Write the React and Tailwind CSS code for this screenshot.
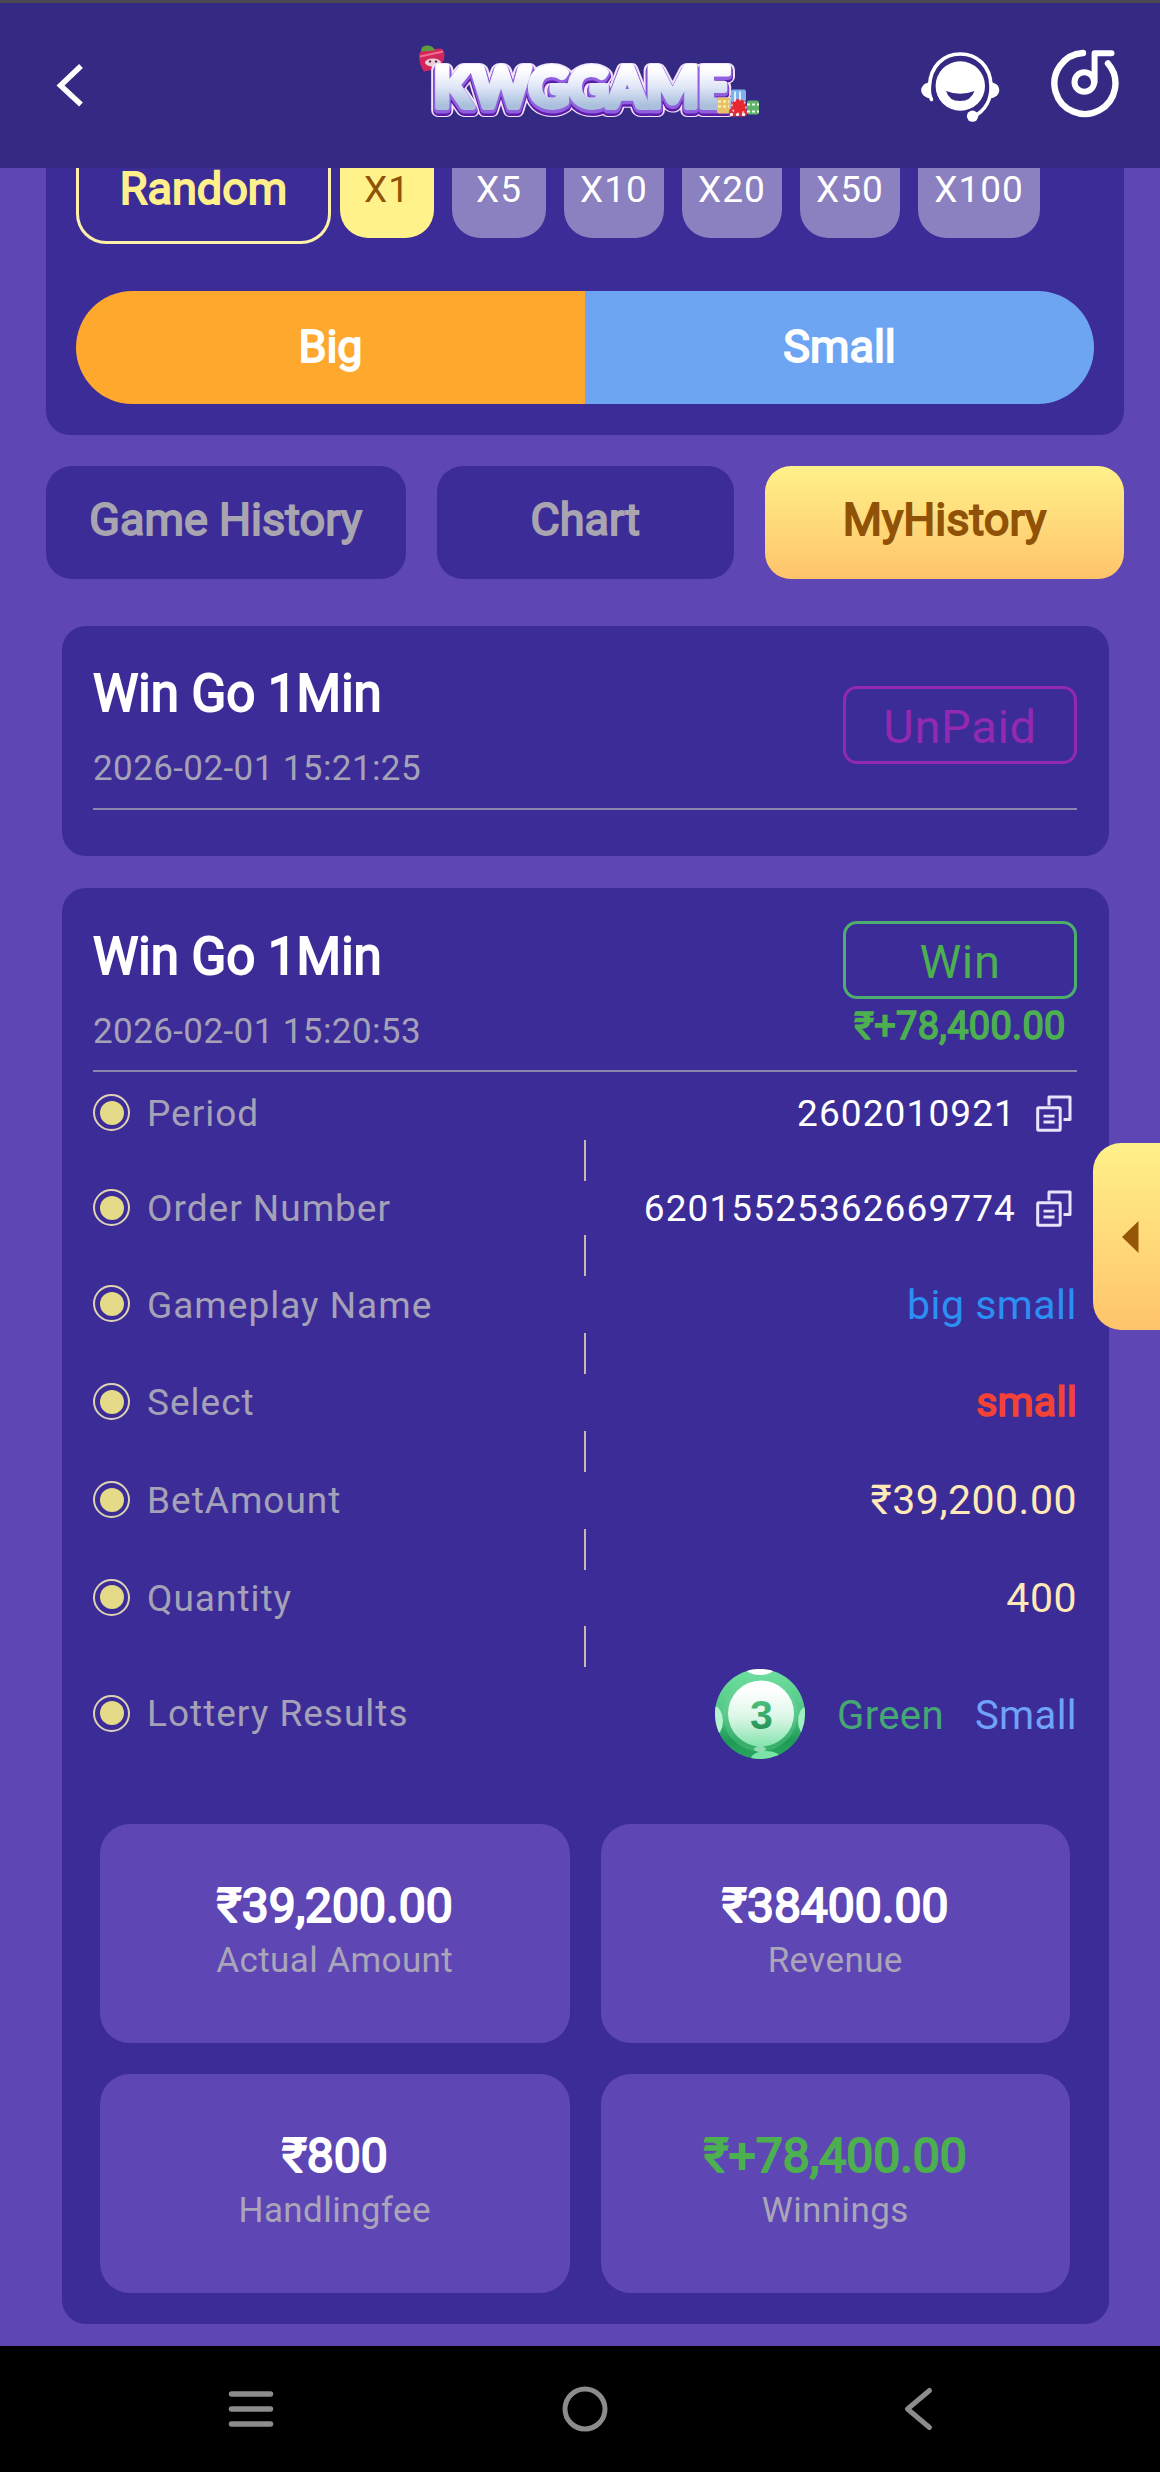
import { useState } from "react"

function BackIcon() {
    return (
        <svg width="40" height="90" viewBox="50 40.5 40 90" fill="none">
            <path d="M81 65.500 L60.5 85 L81 104" stroke="#fff" strokeWidth="5.500" />
        </svg>
    )
}

function Logo() {
    const word = {
        x: 434,
        textLength: 296,
        lengthAdjust: "spacingAndGlyphs",
        fontSize: 55,
        fontWeight: 900,
        fontFamily: "Lato, sans-serif",
        strokeLinejoin: "round",
    }
    return (
        <svg width="380" height="90" viewBox="400 40.5 380 90">
            <defs>
                <linearGradient id="face" x1="0" y1="0" x2="0" y2="1">
                    <stop offset="0.25" stopColor="#ffffff" />
                    <stop offset="0.5" stopColor="#e2e8f8" />
                    <stop offset="0.8" stopColor="#a9bfdc" />
                </linearGradient>
            </defs>
            {/* strawberry */}
            <g>
                <path d="M419 57 Q418 50 426 49 L441 48 Q446 50 444 59 L440 68 L424 71 Q420 66 419 57Z" fill="#d3265d" />
                <path d="M421 51 Q421 45 427 45 Q433 45 435 50Z" fill="#5f9c3f" />
                <path d="M420 56 L443 51" stroke="#ef6d8f" strokeWidth="2" />
                <ellipse cx="433" cy="62" rx="8" ry="4" fill="#e9cfd9" />
                <circle cx="430" cy="61" r="1.2" fill="#6d2a4a" />
                <circle cx="436" cy="61" r="1.2" fill="#6d2a4a" />
            </g>
            <text {...word} y="109" fill="#f3e4fb" stroke="#f3e4fb" strokeWidth="14">KWGGAME</text>
            <text {...word} y="110.500" fill="#5a1ba6" stroke="#5a1ba6" strokeWidth="10">KWGGAME</text>
            <text {...word} y="108" fill="#8f5fe0" stroke="#8f5fe0" strokeWidth="9">KWGGAME</text>
            <text {...word} y="106.500" fill="url(#face)" stroke="url(#face)" strokeWidth="6">KWGGAME</text>
            {/* casino chips */}
            <g>
                <rect x="731" y="89" width="15" height="12" rx="2" fill="#7fb0ee" />
                <path d="M735 91v9M740 91v9" stroke="#fff" strokeWidth="1.5" />
                <rect x="717" y="97" width="13" height="16" rx="2" fill="#e8c065" />
                <path d="M718 101h11M718 106h11" stroke="#fff2c2" strokeWidth="2" strokeDasharray="3 2" />
                <rect x="747" y="100" width="12" height="14" rx="2" fill="#63b26b" />
                <path d="M747 104h12M747 111h12" stroke="#e8ffe8" strokeWidth="2" strokeDasharray="3 2" />
                <rect x="729" y="108" width="18" height="8" rx="3" fill="#d9344a" />
                <path d="M730 114h16" stroke="#fff" strokeWidth="2.5" strokeDasharray="3 3" />
                <circle cx="739" cy="106" r="7.5" fill="#e8282e" />
                <circle cx="739" cy="106" r="7" fill="none" stroke="#ffd9d9" strokeWidth="1.5" strokeDasharray="2 3.5" />
            </g>
        </svg>
    )
}

function ServiceIcon() {
    return (
        <svg width="82" height="90" viewBox="919 40.5 82 90" fill="none">
            <path d="M931.5 99 C929 94 929 89 929.5 85 C930.500 66 943 53.500 960.300 53.500 C977.500 53.500 990.500 66 991 85 C991.500 98 986 110 973 116.500" stroke="#fff" strokeWidth="3.6" strokeLinecap="round" />
            <path d="M930 81.500 C923 83 921 87 921.200 90 C921.500 94 925 97 930 98 Z" fill="#fff" />
            <path d="M991 81.500 C997 83 999.300 86 999.200 90 C999 94 996 97 990 98 Z" fill="#fff" />
            <circle cx="960.300" cy="85.500" r="24.700" fill="#fff" />
            <path d="M946 90.500 Q960 96 974.500 90.500 Q971 100.500 960 100.500 Q949 100.500 946 90.500Z" fill="#342a84" />
            <circle cx="972.500" cy="115.700" r="5.600" fill="#fff" />
        </svg>
    )
}

function MusicIcon() {
    return (
        <svg width="72" height="90" viewBox="1049 40.5 72 90" fill="none" stroke="#fff" strokeLinecap="round">
            <path d="M1083 52.500 A30.500 30.500 0 1 0 1108 63" strokeWidth="6.400" />
            <circle cx="1084.300" cy="81.500" r="9.800" strokeWidth="6" />
            <path d="M1094.600 81.500 V52.700 H1111.500" strokeWidth="6" strokeLinejoin="round" />
        </svg>
    )
}

function CopyIcon() {
    return (
        <svg width="41" height="38" viewBox="0 0 41 38" fill="none" stroke="#e9e2fb" strokeWidth="3">
            <path d="M13 11.500 V3 H34 V25.500 H27.500" strokeLinejoin="round" />
            <rect x="1.700" y="13.700" width="22.500" height="22.500" rx="1" />
            <path d="M7.500 22.200 H18.500 M7.500 28 H18.500" strokeWidth="2.800" />
        </svg>
    )
}

function Ball() {
    return (
        <svg width="90" height="90" viewBox="0 0 90 90">
            <defs>
                <linearGradient id="ball" x1="0" y1="0" x2="0" y2="1">
                    <stop offset="0" stopColor="#6fe09f" />
                    <stop offset="0.5" stopColor="#50c585" />
                    <stop offset="0.8" stopColor="#1f9a55" />
                    <stop offset="1" stopColor="#2aa763" />
                </linearGradient>
                <linearGradient id="plate" x1="0" y1="0" x2="0" y2="1">
                    <stop offset="0.15" stopColor="#ffffff" />
                    <stop offset="0.55" stopColor="#dcf7e7" />
                    <stop offset="1" stopColor="#84e3ad" />
                </linearGradient>
                <linearGradient id="digit" x1="0" y1="0" x2="0" y2="1">
                    <stop offset="0.2" stopColor="#4cbf80" />
                    <stop offset="0.9" stopColor="#1f8f52" />
                </linearGradient>
                <clipPath id="round"><circle cx="45" cy="45" r="45" /></clipPath>
            </defs>
            <g clipPath="url(#round)">
                <rect width="90" height="90" fill="url(#ball)" />
                <circle cx="45" cy="45" r="37.500" fill="#6fdc9f" opacity="0.3" />
                <ellipse cx="45" cy="-2" rx="15" ry="8" fill="#fff" />
                <ellipse cx="-1" cy="52" rx="9" ry="15" fill="#b5f2cf" />
                <ellipse cx="91" cy="52" rx="8" ry="14" fill="#a3edc4" />
                <ellipse cx="51" cy="90" rx="15" ry="8" fill="#7be3a8" />
                <circle cx="46" cy="44.500" r="33" fill="url(#plate)" />
                <ellipse cx="45" cy="80" rx="6" ry="3" fill="#c9f5da" opacity="0.6" />
            </g>
            <text x="46.500" y="59.500" textAnchor="middle" fontSize="41" fontWeight="700" fontFamily="Liberation Sans, sans-serif" fill="url(#digit)">3</text>
        </svg>
    )
}

function Dot() {
    return (
        <div className="w-[37px] h-[37px] mb-px rounded-full border-2 border-[#dcd3b4] flex items-center justify-center">
            <div className="w-6 h-6 rounded-full bg-[#e5da88]" />
        </div>
    )
}

function CardHeader({ date, status, amount }) {
    const color = amount ? "border-[#4caf6e] text-[#4caf50]" : "border-[#9229b0] text-[#9229b0]"
    return (
        <div className="h-[184px] border-b-2 border-[#8a86ae] flex items-center justify-between">
            <div className="self-start pt-[38.5px]">
                <h3 className="text-[51px] leading-[60px] [-webkit-text-stroke:1.9px] text-white">Win Go 1Min</h3>
                <p className="mt-6 text-[35px] leading-[41px] tracking-[0.4px] text-[#a5a2b8]">{date}</p>
            </div>
            <div className="w-[234px] pt-4 text-center">
                <div className={"h-[78px] border-3 rounded-[14px] text-[47px] leading-[76px] tracking-[0.7px] " + color}>
                    {status}
                </div>
                {amount && (
                    <p className="pt-0.5 pb-0.5 text-[38px] leading-[50px] tracking-[0.3px] [-webkit-text-stroke:1.6px] text-[#4caf50]">{amount}</p>
                )}
            </div>
        </div>
    )
}

export default function App() {
    const [tab, setTab] = useState("MyHistory")
    const [multiple, setMultiple] = useState("X1")

    const multiples = [
        { name: "X1", width: "w-[94px]" },
        { name: "X5", width: "w-[94px]" },
        { name: "X10", width: "w-[100px]" },
        { name: "X20", width: "w-[100px]" },
        { name: "X50", width: "w-[100px]" },
        { name: "X100", width: "w-[122px]" },
    ]

    const tabs = [
        { name: "Game History", width: "w-[359.5px]" },
        { name: "Chart", width: "w-[297px]" },
        { name: "MyHistory", width: "w-[359px]" },
    ]

    const details = [
        { label: "Period", height: "h-[54px]", value: "2602010921", copy: true },
        { label: "Order Number", height: "h-[54px]", value: "62015525362669774", copy: true },
        { label: "Gameplay Name", height: "h-[56.5px]", value: "big small", style: "tracking-[0.5px] text-[#2b90f2]" },
        { label: "Select", height: "h-[57px]", value: "small", style: "tracking-[0.3px] [-webkit-text-stroke:1.7px] text-[#f44336]" },
        { label: "BetAmount", height: "h-[57px]", value: "₹39,200.00", style: "tracking-[0.5px] text-[#ffe9b8]" },
        { label: "Quantity", height: "h-[56px]", value: "400", style: "tracking-[0.5px] text-[#ffe9b8]" },
    ]

    const stats = [
        { value: "₹39,200.00", label: "Actual Amount", color: "text-white" },
        { value: "₹38400.00", label: "Revenue", color: "text-white" },
        { value: "₹800", label: "Handlingfee", color: "text-white" },
        { value: "₹+78,400.00", label: "Winnings", color: "text-[#4caf50]" },
    ]

    return (
        <div className="relative w-[1160px] h-[2472px] overflow-hidden flex flex-col bg-[#5e47b5] font-[Roboto,sans-serif]">
            {/* --- HEADER --- */}
            <header className="h-[168px] shrink-0 border-t-3 border-[#4b4a52] bg-[#342a84] flex items-center">
                <div className="w-[400px] pl-[50px]">
                    <BackIcon />
                </div>
                <Logo />
                <div className="flex-1 flex justify-end gap-12 pr-[39px]">
                    <ServiceIcon />
                    <MusicIcon />
                </div>
            </header>

            <main className="flex-1 pl-[46px] pr-9">
                {/* --- BET PANEL --- */}
                <section className="h-[267px] px-[30px] rounded-b-[24px] bg-[#3c2c97]">
                    <div className="h-[77px] flex items-start">
                        <button className="w-[255px] h-[76px] mr-[9px] flex justify-center border-3 border-t-0 border-[#fdf0a8] rounded-b-[30px] text-[45px] leading-[41px] [-webkit-text-stroke:1.8px] text-[#fff08c]">
                            Random
                        </button>
                        <div className="flex gap-[18px]">
                            {multiples.map((m) => (
                                <button
                                    key={m.name}
                                    onClick={() => setMultiple(m.name)}
                                    className={
                                        "h-[70px] flex justify-center rounded-b-[28px] text-[37px] leading-[44px] tracking-[1px] " +
                                        m.width +
                                        (multiple === m.name ? " bg-[#fff28a] text-[#8f5206]" : " bg-[#8b80c0] text-white")
                                    }
                                >
                                    {m.name}
                                </button>
                            ))}
                        </div>
                    </div>
                    <div className="mt-[46px] h-[113px] flex rounded-full overflow-hidden text-[45px] leading-[111px] [-webkit-text-stroke:1.8px] text-white text-center">
                        <div className="flex-1 bg-[#ffa82e]">Big</div>
                        <div className="flex-1 bg-[#6ea5f3]">Small</div>
                    </div>
                </section>

                {/* --- TABS --- */}
                <nav className="mt-[31px] flex justify-between">
                    {tabs.map((t) => (
                        <button
                            key={t.name}
                            onClick={() => setTab(t.name)}
                            className={
                                "h-[112.5px] pb-1 rounded-[26px] text-[45px] leading-[108px] [-webkit-text-stroke:1.8px] " +
                                t.width +
                                (tab === t.name
                                    ? " bg-linear-to-b from-[#fff18a] to-[#fec36b] text-[#8f5206]"
                                    : " bg-[#3c2c97] text-[#a8a5b0]")
                            }
                        >
                            {t.name}
                        </button>
                    ))}
                </nav>

                {/* --- BET RECORDS --- */}
                <div className="mt-[47px] pl-[15.5px] pr-[15px] flex flex-col gap-8">
                    <section className="h-[230.5px] pl-[31.5px] pr-8 rounded-[24px] bg-[#3c2c97]">
                        <CardHeader date="2026-02-01 15:21:25" status="UnPaid" />
                    </section>

                    <section className="h-[1436px] pl-[31.5px] pr-8 rounded-[24px] bg-[#3c2c97]">
                        <CardHeader date="2026-02-01 15:20:53" status="Win" amount="₹+78,400.00" />

                        <div className="pt-3.5 text-[37px]">
                            {details.map((d) => (
                                <div key={d.label}>
                                    <div className={"flex items-center justify-between " + d.height}>
                                        <div className="flex items-center gap-[17px]">
                                            <Dot />
                                            <span className="pt-0.5 tracking-[1px] text-[#a5a2b8]">{d.label}</span>
                                        </div>
                                        {d.copy ? (
                                            <div className="flex items-center gap-5">
                                                <span className="pt-0.5 tracking-[1.1px] text-white">{d.value}</span>
                                                <CopyIcon />
                                            </div>
                                        ) : (
                                            <span className={"pt-0.5 text-[41px] " + d.style}>{d.value}</span>
                                        )}
                                    </div>
                                    <div className="w-0.5 h-[41px] mx-auto bg-[#c9b9ac]" />
                                </div>
                            ))}

                            <div className="h-[94px] flex items-center justify-between">
                                <div className="flex items-center gap-[17px]">
                                    <Dot />
                                    <span className="tracking-[1px] text-[#a5a2b8]">Lottery Results</span>
                                </div>
                                <div className="flex items-center text-[40px] tracking-[0.4px]">
                                    <Ball />
                                    <span className="pt-1 ml-8 text-[#45a874]">Green</span>
                                    <span className="pt-1 ml-[31px] text-[#6fa3f7]">Small</span>
                                </div>
                            </div>
                        </div>

                        {/* totals */}
                        <div className="mt-[63px] px-[7px] grid grid-cols-2 gap-x-[31px] gap-y-[31px]">
                            {stats.map((s) => (
                                <div key={s.label} className="h-[219px] pt-[52px] rounded-[30px] bg-[#5e47b5] text-center">
                                    <p className={"text-[48px] leading-[60px] [-webkit-text-stroke:1.9px] " + s.color}>{s.value}</p>
                                    <p className="text-[35px] leading-[50px] tracking-[0.4px] text-[#aaa5b8]">{s.label}</p>
                                </div>
                            ))}
                        </div>
                    </section>
                </div>
            </main>

            {/* side drawer handle */}
            <div className="absolute right-0 top-[1143px] w-[67px] h-[187px] pl-[29px] flex items-center rounded-l-[28px] bg-linear-to-b from-[#fff18a] to-[#fec36b]">
                <svg width="17" height="32" viewBox="0 0 17 32">
                    <path d="M0 16 L16.500 0 V32 Z" fill="#955607" />
                </svg>
            </div>

            {/* --- SYSTEM NAV --- */}
            <footer className="h-[126px] shrink-0 pl-[10px] bg-black flex items-center justify-center">
                <svg width="46" height="38" viewBox="0 0 46 38" fill="none" stroke="#8c8c8c" strokeWidth="5.500" strokeLinecap="round">
                    <path d="M3.500 4 H42.500 M3.500 19 H42.500 M3.500 34 H42.500" />
                </svg>
                <svg className="mx-[288px]" width="46" height="46" viewBox="0 0 46 46" fill="none" stroke="#8c8c8c" strokeWidth="5">
                    <circle cx="23" cy="23" r="20" />
                </svg>
                <svg width="46" height="46" viewBox="0 0 46 46" fill="none" stroke="#8c8c8c" strokeWidth="5" strokeLinecap="round" strokeLinejoin="round">
                    <path d="M33.500 4.500 L11.500 23 L33.500 41.500" />
                </svg>
            </footer>
        </div>
    )
}
